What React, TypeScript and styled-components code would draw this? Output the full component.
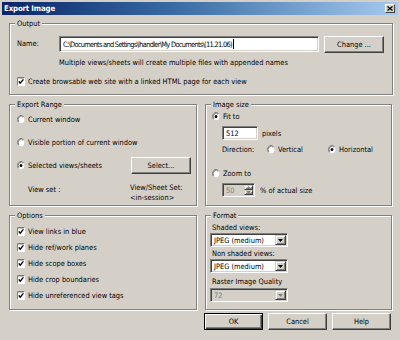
import React from 'react';
import styled, { createGlobalStyle, css } from 'styled-components';

const FONT = `"DejaVu Sans Condensed", "Liberation Sans Narrow", "Liberation Sans", Arial, sans-serif`;

const Global = createGlobalStyle`
  html, body { margin: 0; padding: 0; background: #d4d0c8; }
  body { font-family: ${FONT}; font-size: 7.4px; color: #000; font-stretch: condensed; }
  * { box-sizing: border-box; }
`;

const Window = styled.div`
  width: 400px;
  height: 340px;
  background: #d4d0c8;
  display: flex;
  flex-direction: column;
  padding: 2px 2px 0 2px;
  overflow: hidden;
`;

const TitleBar = styled.div`
  height: 13px;
  flex: none;
  display: flex;
  align-items: center;
  justify-content: space-between;
  padding: 0 3px 0 2px;
  background: linear-gradient(to right, #0a246a 0%, #3a6ea5 45%, #a6caf0 100%);
`;

const TitleText = styled.span`
  color: #fff;
  font-weight: bold;
  font-size: 7.8px;
  letter-spacing: -0.15px;
  line-height: 13px;
`;

const CloseBtn = styled.div`
  width: 10px;
  height: 9px;
  background: #d4d0c8;
  border: 1px solid;
  border-color: #fff #404040 #404040 #fff;
  display: flex;
  align-items: center;
  justify-content: center;
`;

const Body = styled.div`
  display: flex;
  flex-direction: column;
  padding: 0 5px 0 7px;
`;

const Group = styled.div<{ $h: number; $mt?: number }>`
  position: relative;
  height: ${p => p.$h}px;
  margin-top: ${p => p.$mt ?? 0}px;
  border: 1px solid #808080;
  box-shadow: inset 1px 1px 0 #fff, 1px 1px 0 #fff;
  display: flex;
  flex-direction: column;
`;

const Legend = styled.span`
  position: absolute;
  top: -6px;
  left: 5px;
  padding: 0 2px;
  background: #d4d0c8;
  line-height: 11px;
  white-space: nowrap;
`;

const Grid = styled.div`
  display: grid;
  grid-template-columns: 188px 187px;
  column-gap: 8px;
  row-gap: 9px;
  margin-top: 9px;
`;

const Row = styled.div<{ $mt?: number; $pl?: number; $pr?: number; $h?: number; $gap?: number; $align?: string }>`
  display: flex;
  align-items: ${p => p.$align ?? 'center'};
  margin-top: ${p => p.$mt ?? 0}px;
  padding-left: ${p => p.$pl ?? 0}px;
  padding-right: ${p => p.$pr ?? 0}px;
  height: ${p => p.$h ?? 11}px;
  gap: ${p => p.$gap ?? 0}px;
  flex: none;
`;

const Column = styled.div<{ $mt?: number; $pl?: number; $gap?: number }>`
  display: flex;
  flex-direction: column;
  margin-top: ${p => p.$mt ?? 0}px;
  padding-left: ${p => p.$pl ?? 0}px;
  gap: ${p => p.$gap ?? 0}px;
`;

const Text = styled.span<{ $gray?: boolean; $w?: number; $ml?: number; $mt?: number }>`
  line-height: 11px;
  white-space: nowrap;
  color: ${p => (p.$gray ? '#808080' : '#000')};
  ${p => p.$w !== undefined && css`width: ${p.$w}px; flex: none;`}
  margin-left: ${p => p.$ml ?? 0}px;
  margin-top: ${p => p.$mt ?? 0}px;
`;

const TwoLine = styled.div`
  display: flex;
  flex-direction: column;
  line-height: 10px;
  white-space: nowrap;
`;

const Field = styled.div<{ $w: number; $h: number; $disabled?: boolean; $ml?: number }>`
  width: ${p => p.$w}px;
  height: ${p => p.$h}px;
  flex: none;
  margin-left: ${p => p.$ml ?? 0}px;
  background: ${p => (p.$disabled ? '#d4d0c8' : '#fff')};
  border-top: 1px solid #808080;
  border-left: 1px solid #808080;
  border-right: 1px solid #fff;
  border-bottom: 1px solid #fff;
  box-shadow: inset 1px 1px 0 #404040, inset -1px -1px 0 #d4d0c8;
  display: flex;
  align-items: stretch;
  padding: 1px;
  color: ${p => (p.$disabled ? '#808080' : '#000')};
`;

const FieldText = styled.span<{ $tight?: boolean }>`
  flex: 1;
  display: flex;
  align-items: center;
  padding-left: 2px;
  line-height: 11px;
  white-space: nowrap;
  overflow: hidden;
  letter-spacing: ${p => (p.$tight ? '-0.7px' : 'normal')};
`;

const Caret = styled.span`
  display: inline-block;
  width: 1px;
  height: 10px;
  background: #000;
  margin-left: 1.5px;
`;

const Button = styled.div<{ $w: number; $ml?: number; $auto?: boolean; $default?: boolean }>`
  width: ${p => p.$w}px;
  height: 17px;
  flex: none;
  margin-left: ${p => (p.$auto ? 'auto' : `${p.$ml ?? 0}px`)};
  background: #d4d0c8;
  display: flex;
  align-items: center;
  justify-content: center;
  line-height: 11px;
  white-space: nowrap;
  ${p =>
    p.$default
      ? css`
          border: 1px solid #000;
          box-shadow: inset 1px 1px 0 #fff, inset -1px -1px 0 #404040, inset -2px -2px 0 #808080;
        `
      : css`
          border: 1px solid;
          border-color: #fff #404040 #404040 #fff;
          box-shadow: inset -1px -1px 0 #808080;
        `}
`;

const ArrowBtn = styled.div<{ $w: number }>`
  width: ${p => p.$w}px;
  flex: none;
  background: #d4d0c8;
  border: 1px solid;
  border-color: #d4d0c8 #404040 #404040 #d4d0c8;
  box-shadow: inset 1px 1px 0 #fff, inset -1px -1px 0 #808080;
  display: flex;
  align-items: center;
  justify-content: center;
`;

const SpinStack = styled.div`
  width: 9px;
  flex: none;
  display: flex;
  flex-direction: column;
`;

const SpinHalf = styled(ArrowBtn)`
  flex: 1;
`;

const ButtonBar = styled.div`
  display: flex;
  justify-content: flex-end;
  gap: 5px;
  margin-top: 3px;
  padding-right: 2px;
`;

const Mark = styled.span`
  display: inline-flex;
  flex: none;
  width: 8px;
  height: 9px;
`;

const Radio = ({ checked }: { checked?: boolean }) => (
  <Mark>
    <svg width="8" height="9" viewBox="0 0 8 9">
      <ellipse cx="4" cy="4.5" rx="3.3" ry="3.8" fill="#fff" />
      <path d="M1.4 7.3 A3.5 4 0 0 1 6.6 1.7" stroke="#808080" strokeWidth="1" fill="none" />
      <path d="M1.9 6.6 A2.6 3.1 0 0 1 6.1 2.4" stroke="#404040" strokeWidth="0.6" fill="none" />
      {checked && <ellipse cx="4" cy="4.5" rx="1.4" ry="1.6" fill="#000" />}
    </svg>
  </Mark>
);

const Check = () => (
  <Mark>
    <svg width="8" height="9" viewBox="0 0 8 9">
      <rect x="0" y="0" width="8" height="9" fill="#fff" />
      <path d="M0.5 8.5 V0.5 H7.5" stroke="#808080" strokeWidth="1" fill="none" />
      <path d="M1.2 1.2 H6.8" stroke="#404040" strokeWidth="0.5" fill="none" />
      <path d="M1.8 4.3 L3.2 6.2 L6.4 2.4" stroke="#000" strokeWidth="1.4" fill="none" />
    </svg>
  </Mark>
);

const Down = ({ gray }: { gray?: boolean }) => (
  <svg width="5" height="3" viewBox="0 0 5 3">
    <path d="M0 0 H5 L2.5 3 Z" fill={gray ? '#808080' : '#000'} />
  </svg>
);

const Up = ({ gray }: { gray?: boolean }) => (
  <svg width="5" height="3" viewBox="0 0 5 3">
    <path d="M0 3 H5 L2.5 0 Z" fill={gray ? '#808080' : '#000'} />
  </svg>
);

const RadioRow = ({ label, checked, mt, pl }: { label: string; checked?: boolean; mt: number; pl: number }) => (
  <Row $mt={mt} $pl={pl} $gap={3}>
    <Radio checked={checked} />
    <Text>{label}</Text>
  </Row>
);

const CheckRow = ({ label }: { label: string }) => (
  <Row $gap={3}>
    <Check />
    <Text>{label}</Text>
  </Row>
);

const Combo = ({ value, disabled }: { value: string; disabled?: boolean }) => (
  <Field $w={78} $h={14} $ml={4} $disabled={disabled}>
    <FieldText>{value}</FieldText>
    <ArrowBtn $w={11}>
      <Down gray={disabled} />
    </ArrowBtn>
  </Field>
);

export default function App() {
  return (
    <>
      <Global />
      <Window>
        <TitleBar>
          <TitleText>Export Image</TitleText>
          <CloseBtn>
            <svg width="6" height="5" viewBox="0 0 6 5">
              <path d="M0.5 0.5 L5.5 4.5 M5.5 0.5 L0.5 4.5" stroke="#000" strokeWidth="1.2" />
            </svg>
          </CloseBtn>
        </TitleBar>
        <Body>
          <Group $h={72} $mt={8}>
            <Legend>Output</Legend>
            <Row $mt={12} $h={17} $pl={7} $align="flex-start">
              <Text $w={42} $mt={2}>Name:</Text>
              <Field $w={260} $h={16}>
                <FieldText $tight>
                  {'C:\\Documents and Settings\\lhandler\\My Documents\\(11.21.06)'}
                  <Caret />
                </FieldText>
              </Field>
              <Button $w={60} $ml={5}>Change ...</Button>
            </Row>
            <Row $mt={4} $pl={49}>
              <Text>Multiple views/sheets will create multiple files with appended names</Text>
            </Row>
            <Column $mt={8} $pl={7}>
              <CheckRow label="Create browsable web site with a linked HTML page for each view" />
            </Column>
          </Group>

          <Grid>
            <Group $h={102}>
              <Legend>Export Range</Legend>
              <RadioRow mt={9} pl={7} label="Current window" />
              <RadioRow mt={12} pl={7} label="Visible portion of current window" />
              <Row $mt={9} $pl={7} $pr={5} $h={17} $gap={3}>
                <Radio checked />
                <Text>Selected views/sheets</Text>
                <Button $w={60} $auto>Select...</Button>
              </Row>
              <Row $mt={9} $pl={18} $h={20} $align="flex-start">
                <Text $w={102} $mt={1}>View set :</Text>
                <TwoLine>
                  <span>View/Sheet Set:</span>
                  <span>&lt;in-session&gt;</span>
                </TwoLine>
              </Row>
            </Group>

            <Group $h={102}>
              <Legend>Image size</Legend>
              <RadioRow mt={6} pl={6} label="Fit to" checked />
              <Row $mt={4} $pl={16} $h={14} $gap={4}>
                <Field $w={36} $h={14}>
                  <FieldText>512</FieldText>
                </Field>
                <Text>pixels</Text>
              </Row>
              <Row $mt={4} $pl={16}>
                <Text $w={45}>Direction:</Text>
                <Radio />
                <Text $w={50} $ml={3}>Vertical</Text>
                <Radio checked />
                <Text $ml={3}>Horizontal</Text>
              </Row>
              <RadioRow mt={13} pl={6} label="Zoom to" />
              <Row $mt={4} $pl={16} $h={14} $gap={5}>
                <Field $w={33} $h={14} $disabled>
                  <FieldText>50</FieldText>
                  <SpinStack>
                    <SpinHalf $w={9}>
                      <Up gray />
                    </SpinHalf>
                    <SpinHalf $w={9}>
                      <Down gray />
                    </SpinHalf>
                  </SpinStack>
                </Field>
                <Text>% of actual size</Text>
              </Row>
            </Group>

            <Group $h={95}>
              <Legend>Options</Legend>
              <Column $mt={10} $pl={7} $gap={5}>
                <CheckRow label="View links in blue" />
                <CheckRow label="Hide ref/work planes" />
                <CheckRow label="Hide scope boxes" />
                <CheckRow label="Hide crop boundaries" />
                <CheckRow label="Hide unreferenced view tags" />
              </Column>
            </Group>

            <Group $h={95}>
              <Legend>Format</Legend>
              <Row $mt={6} $pl={6}>
                <Text>Shaded views:</Text>
              </Row>
              <Row $h={14}>
                <Combo value="JPEG (medium)" />
              </Row>
              <Row $mt={1} $pl={6}>
                <Text>Non shaded views:</Text>
              </Row>
              <Row $h={14}>
                <Combo value="JPEG (medium)" />
              </Row>
              <Row $mt={3} $pl={6}>
                <Text>Raster Image Quality</Text>
              </Row>
              <Row $mt={1} $h={14}>
                <Combo value="72" disabled />
              </Row>
            </Group>
          </Grid>

          <ButtonBar>
            <Button $w={59} $default>OK</Button>
            <Button $w={59}>Cancel</Button>
            <Button $w={59}>Help</Button>
          </ButtonBar>
        </Body>
      </Window>
    </>
  );
}
